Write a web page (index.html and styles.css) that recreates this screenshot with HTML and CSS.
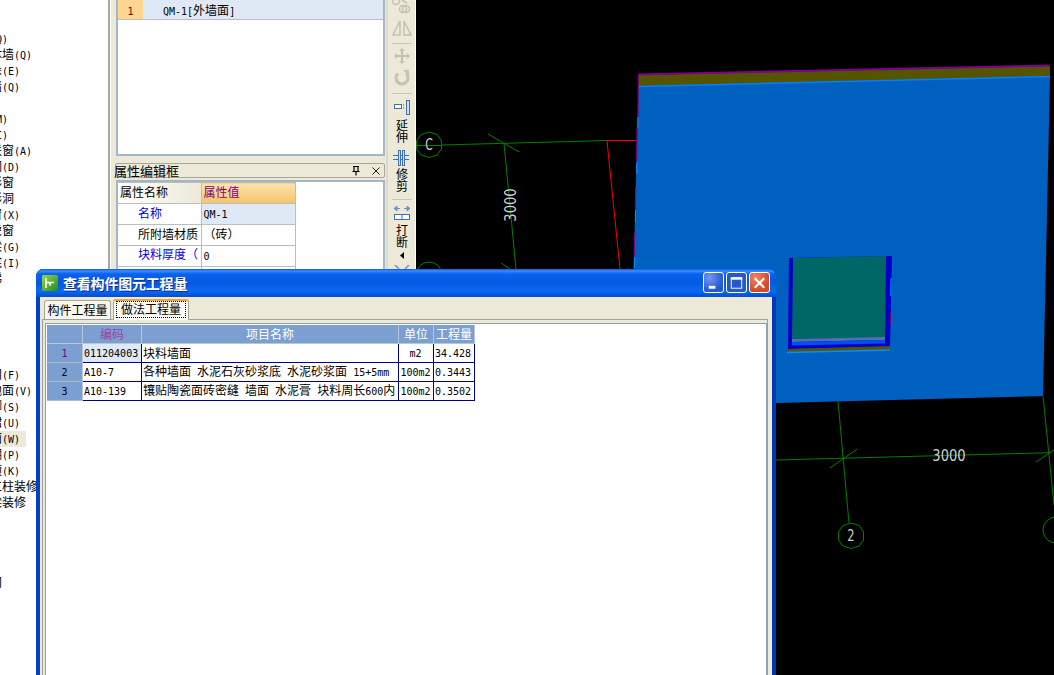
FILE: index.html
```html
<!DOCTYPE html>
<html lang="zh">
<head>
<meta charset="utf-8">
<title>查看构件图元工程量</title>
<link rel="stylesheet" href="styles.css">
</head>
<body>
<div class="app">
  <aside class="tree">
    <ul class="tree-list">
      <li>墙<span class="l">(Q)</span></li>
      <li>砌体墙<span class="l">(Q)</span></li>
      <li>墙垛<span class="l">(E)</span></li>
      <li>幕墙<span class="l">(Q)</span></li>
      <li></li>
      <li>门<span class="l">(M)</span></li>
      <li>窗<span class="l">(C)</span></li>
      <li>门联窗<span class="l">(A)</span></li>
      <li>墙洞<span class="l">(D)</span></li>
      <li>带形窗</li>
      <li>带形洞</li>
      <li>飘窗<span class="l">(X)</span></li>
      <li>老虎窗</li>
      <li>过梁<span class="l">(G)</span></li>
      <li>壁龛<span class="l">(I)</span></li>
      <li>楼梯</li>
      <li></li><li></li><li></li><li></li><li></li>
      <li>房间<span class="l">(F)</span></li>
      <li>楼地面<span class="l">(V)</span></li>
      <li>踢脚<span class="l">(S)</span></li>
      <li>墙裙<span class="l">(U)</span></li>
      <li class="selected">墙面<span class="l">(W)</span></li>
      <li>天棚<span class="l">(P)</span></li>
      <li>吊顶<span class="l">(K)</span></li>
      <li>独立柱装修</li>
      <li>单梁装修</li>
      <li></li><li></li><li></li><li></li>
      <li>房间</li>
    </ul>
  </aside>

  <section class="side">
    <div class="list-box">
      <div class="list-row">
        <span class="list-num"><span class="l">1</span></span>
        <span class="list-name"><span class="l">QM-1[</span>外墙面<span class="l">]</span></span>
      </div>
    </div>
    <div class="prop-title">
      <span class="prop-title-text">属性编辑框</span>
      <svg class="pin" width="12" height="12" viewBox="0 0 12 12"><path d="M3 1.500h6M4 1.500v5h4v-5M2.500 6.500h7M6 6.500v4" fill="none" stroke="#000" stroke-width="1.200"/></svg>
      <svg class="close-x" width="10" height="10" viewBox="0 0 10 10"><path d="M1.500 1.500l7 7M8.500 1.500l-7 7" stroke="#222" fill="none"/></svg>
    </div>
    <div class="prop-box">
      <table class="prop-table">
        <tr><th class="prop-h-name">属性名称</th><th class="prop-h-val">属性值</th></tr>
        <tr><td class="prop-name key">名称</td><td class="prop-val active"><span class="l">QM-1</span></td></tr>
        <tr><td class="prop-name">所附墙材质</td><td class="prop-val">（砖）</td></tr>
        <tr><td class="prop-name key raised">块料厚度（</td><td class="prop-val"><span class="l">0</span></td></tr>
        <tr><td class="prop-name"></td><td class="prop-val"></td></tr>
      </table>
    </div>
  </section>

  <nav class="toolbar">
    <svg class="tool tool-first" width="20" height="15" viewBox="0 0 20 15"><g fill="none" stroke="#c4c2b4" stroke-width="1.600"><circle cx="4" cy="1" r="3.500"/><circle cx="11" cy="9" r="3.500"/><circle cx="14" cy="9" r="3.500"/><path d="M10 0l5 3"/></g></svg>
    <svg class="tool tool-mirror" width="20" height="16" viewBox="0 0 20 16"><g fill="none" stroke="#c4c2b4" stroke-width="1.500"><path d="M8 1L1 15h7zM12 1l7 14h-7z"/></g></svg>
    <hr class="tool-sep sep-a">
    <svg class="tool tool-move" width="16" height="16" viewBox="0 0 16 16"><path d="M8 0l3 3H9v4h4V5l3 3-3 3V9H9v4h2l-3 3-3-3h2V9H3v2L0 8l3-3v2h4V3H5z" fill="#c4c2b4"/></svg>
    <svg class="tool tool-rotate" width="16" height="16" viewBox="0 0 16 16"><path d="M4 3.500A6 6 0 1 0 12 3.500" fill="none" stroke="#c4c2b4" stroke-width="3"/><path d="M9 0h6v6z" fill="#c4c2b4"/></svg>
    <hr class="tool-sep sep-b">
    <svg class="tool tool-extend" width="16" height="15" viewBox="0 0 16 15"><rect x="0.500" y="4.500" width="7" height="4" fill="#fff" stroke="#3f6fb5"/><path d="M9 5h1M9 8h1" stroke="#3f6fb5"/><rect x="12.500" y="0.500" width="3" height="14" fill="#cfe0f5" stroke="#3f6fb5"/></svg>
    <span class="tool-label label-extend">延<br>伸</span>
    <svg class="tool tool-trim" width="18" height="16" viewBox="0 0 18 16"><path d="M0 5.500h16M0 9.500h16" stroke="#3f6fb5"/><rect x="5.500" y="0.500" width="2" height="15" fill="#cfe0f5" stroke="#3f6fb5"/><rect x="9.500" y="0.500" width="2" height="15" fill="#cfe0f5" stroke="#3f6fb5"/></svg>
    <span class="tool-label label-trim">修<br>剪</span>
    <hr class="tool-sep sep-c">
    <svg class="tool tool-break" width="16" height="15" viewBox="0 0 16 15"><path d="M0 2.500h6M16 2.500h-6M3 0L0 2.500l3 2.500zM13 0l3 2.500-3 2.500z" fill="#6c92cc" stroke="#6c92cc"/><rect x="0.500" y="8.500" width="15" height="5" fill="#fff" stroke="#3f6fb5"/><path d="M8 8.500v5" stroke="#3f6fb5"/></svg>
    <span class="tool-label label-break">打<br>断</span>
    <svg class="tool tool-caret" width="5" height="7" viewBox="0 0 5 7"><path d="M4 0v7L0 3.500z" fill="#000"/></svg>
    <svg class="tool tool-more" width="16" height="6" viewBox="0 0 16 6"><path d="M1 0l4 4M15 0l-4 4" stroke="#6c92cc" stroke-width="1.500"/></svg>
  </nav>

  <main class="canvas">
    <svg class="drawing" width="638" height="675" viewBox="416 0 638 675">
      <polygon points="638.500,85 1050,76 1043,396 776,403 630,406" fill="#0060c0"/>
      <polygon points="639,75 1050,66 1050,76 639,86" fill="#555500"/>
      <path d="M638 74.500L1049 65.500" stroke="#800090" stroke-width="2"/>
      <path d="M639 86.500L1050 76.500" stroke="#0080ff" stroke-width="1.500"/>
      <path d="M638.300 75L638 116M637 128L636.700 162M635.700 187L635.300 210M634.500 233L634.200 257" stroke="#800080" stroke-width="1.200" fill="none"/>
      <path d="M638 117L637.800 128M636.800 162L636.600 174M635.500 210L635.300 222M634.500 257L634.300 268" stroke="#0090ff" stroke-width="1"/>
      <polygon points="789,258 892,256 890,347 788,349" fill="#0000c8"/>
      <polygon points="793,258 886,256 885,338 792,339" fill="#006666"/>
      <polygon points="792,339 885,337 885,340 792,342" fill="#5070b0"/>
      <polygon points="792,342 885,340 885,343.500 792,345.500" fill="#0050f0"/>
      <polygon points="788,349 890,346 890,350 788,352" fill="#555500"/>
      <path d="M787 352.500L890 350" stroke="#0090ff" stroke-width="1.500"/>
      <path d="M891 278L890.700 296" stroke="#0090ff" stroke-width="1"/>
      <path d="M890.500 313L890.300 325" stroke="#800060" stroke-width="1"/>

      <g fill="none" stroke="#008000" stroke-width="1">
        <path d="M442 145L607 140.500"/>
        <path d="M504 143L516 269"/>
        <path d="M488 134L519 152"/>
        <path d="M501 263L510 269"/>
        <polygon points="429,132 437,134.500 441.500,141 441.500,149 437,155 429,157.500 421,155 416.500,149 416.500,141 421,134.500"/>
        <path d="M416 145.500H442"/>
        <circle cx="429" cy="275" r="13"/>
        <path d="M776 460L1050 452.700"/>
        <path d="M838 401L849 523"/>
        <path d="M830 468L857 449"/>
        <path d="M1043 396L1054 505"/>
        <path d="M1036 462L1054 450"/>
        <polygon points="851,523 859,525.500 863.500,532 863.500,540 859,546 851,548.500 843,546 838.500,540 838.500,532 843,525.500"/>
        <circle cx="1056" cy="530" r="13"/>
      </g>
      <path d="M607 140.500H636M607 141L620 269" stroke="#ff0000" stroke-width="1" fill="none"/>
      <g class="cad-text">
        <text text-anchor="middle" transform="translate(429 150) scale(.8 1.200)">C</text>
        <text text-anchor="middle" transform="translate(851 541) scale(.85 1.200)">2</text>
        <text text-anchor="middle" transform="translate(949 461) scale(.97 1.200)">3000</text>
        <text text-anchor="middle" transform="translate(516 205) rotate(-90) scale(.97 1.200)">3000</text>
      </g>
    </svg>
  </main>

  <div class="dialog">
    <header class="title-bar">
      <svg class="app-icon" width="16" height="16" viewBox="0 0 16 16"><defs><linearGradient id="ig" x1="0" y1="0" x2="1" y2="1"><stop offset="0" stop-color="#9bd84a"/><stop offset="1" stop-color="#1f8a1f"/></linearGradient></defs><rect width="16" height="16" rx="1.500" fill="url(#ig)"/><path d="M4 3v10M4 7.500h8M8 7.500v3" stroke="#fff" stroke-width="1.600" fill="none"/></svg>
      <span class="title-text">查看构件图元工程量</span>
      <div class="win-btns">
        <button class="win-btn win-min"><svg width="20" height="20" viewBox="0 0 20 20"><rect x="5" y="13" width="7" height="3" fill="#fff"/></svg></button>
        <button class="win-btn win-max"><svg width="20" height="20" viewBox="0 0 20 20"><rect x="4.500" y="4.500" width="11" height="11" fill="none" stroke="#fff"/><rect x="4" y="4" width="12" height="2.500" fill="#fff"/></svg></button>
        <button class="win-btn win-close"><svg width="20" height="20" viewBox="0 0 20 20"><path d="M5 5l10 10M15 5L5 15" stroke="#fff" stroke-width="2.200"/></svg></button>
      </div>
    </header>
    <div class="dialog-body">
      <div class="tabs">
        <span class="tab">构件工程量</span>
        <span class="tab tab-active"><span class="tab-focus">做法工程量</span></span>
      </div>
      <div class="tab-panel">
        <div class="grid-frame">
          <table class="qty">
            <colgroup>
              <col class="c-num"><col class="c-code"><col class="c-name"><col class="c-unit"><col class="c-qty">
            </colgroup>
            <tr class="qty-head">
              <th></th><th class="code-head">编码</th><th>项目名称</th><th>单位</th><th>工程量</th>
            </tr>
            <tr>
              <th class="row-num current"><span class="l">1</span></th>
              <td class="code-current"><span class="l">011204003</span></td>
              <td>块料墙面</td>
              <td class="center"><span class="l">m2</span></td>
              <td><span class="l">34.428</span></td>
            </tr>
            <tr>
              <th class="row-num"><span class="l">2</span></th>
              <td><span class="l">A10-7</span></td>
              <td>各种墙面<span class="l"> </span>水泥石灰砂浆底<span class="l"> </span>水泥砂浆面<span class="l"> 15+5mm</span></td>
              <td class="center"><span class="l">100m2</span></td>
              <td><span class="l">0.3443</span></td>
            </tr>
            <tr>
              <th class="row-num"><span class="l">3</span></th>
              <td><span class="l">A10-139</span></td>
              <td>镶贴陶瓷面砖密缝<span class="l"> </span>墙面<span class="l"> </span>水泥膏<span class="l"> </span>块料周长<span class="l">600</span>内</td>
              <td class="center"><span class="l">100m2</span></td>
              <td><span class="l">0.3502</span></td>
            </tr>
          </table>
        </div>
      </div>
    </div>
  </div>
</div>
</body>
</html>
```
FILE: styles.css
```css
* { box-sizing: border-box; }
html, body { margin: 0; padding: 0; background: #000; }
body { font: 12px/16px "Noto Sans CJK SC", "Liberation Sans", sans-serif; color: #000; }
.l { font-family: "DejaVu Sans Mono", "Liberation Mono", monospace; font-size: 10px; line-height: 12px; white-space: pre; }

.app { position: relative; display: flex; width: 1054px; height: 675px; overflow: hidden; }

/* left tree */
.tree { width: 108px; flex: none; background: #fff; overflow: hidden; }
.tree-list { list-style: none; margin: 31px 0 0 -22px; padding: 0; }
.tree-list li { height: 16px; line-height: 14px; white-space: nowrap; }
.tree-list li.selected { background: #ece9d8; width: 48px; }

/* property side */
.side { width: 278px; flex: none; background: #ece9d8; border-left: 2px solid #a8a799; box-shadow: inset 1px 0 0 #fff; padding: 0 1px 0 6px; }
.list-box { height: 156px; background: #fff; border: 2px solid #a4b5c6; border-top: 0; }
.list-row { display: flex; height: 20px; border-bottom: 1px solid #b9bec6; }
.list-num { width: 25px; background: #fdd68f; color: #800000; text-align: center; line-height: 19px; }
.list-name { flex: 1; background: #dfe8f5; padding-left: 20px; line-height: 19px; }
.prop-title { display: flex; align-items: center; height: 15px; margin: 7px 0 0 -1px; border: 1px solid #a8a799; border-radius: 2px; background: #ece9d8; }
.prop-title-text { flex: 1; margin-left: -2px; font-size: 13px; line-height: 13px; }
.pin { margin-right: 9px; }
.close-x { margin-right: 3px; }
.prop-box { height: 200px; margin-top: 2px; background: #fff; border: 2px solid #a4b5c6; }
.prop-table { border-collapse: collapse; table-layout: fixed; width: 177px; }
.prop-table th, .prop-table td { height: 21px; padding: 0 0 2px; line-height: 14px; border: 1px solid #bdbdbd; border-left: 0; font-weight: normal; text-align: left; white-space: nowrap; overflow: hidden; }
.prop-table .prop-h-name { width: 83px; padding-left: 2px; background: linear-gradient(90deg, #fff, #ece9d8); }
.prop-table .prop-h-val { width: 94px; padding-left: 2px; color: #800080; background: linear-gradient(#fde3ae, #f5c36a); }
.prop-table .prop-name { padding-left: 20px; }
.prop-table .prop-name.key { color: #0000e0; }
.prop-table .prop-name.raised { padding-bottom: 5px; }
.prop-table .prop-val { padding-left: 2px; }
.prop-table .prop-val.active { background: #dfe8f5; }

/* vertical toolbar */
.toolbar { width: 30px; flex: none; display: flex; flex-direction: column; align-items: center; background: #ece9d8; border-right: 1px solid #fff; padding-left: 3px; box-shadow: inset 2px 0 0 #dcd9c8; }
.tool { flex: none; display: block; }
.tool-first { margin-top: 0; }
.tool-mirror { margin-top: 5px; }
.tool-sep { width: 20px; height: 1px; flex: none; margin: 0; border: 0; background: #c8c6b6; }
.sep-a { margin-top: 7px; }
.tool-move { margin-top: 4px; }
.tool-rotate { margin-top: 6px; }
.sep-b { margin-top: 7px; }
.tool-extend { margin-top: 6px; }
.tool-label { display: block; flex: none; font-size: 12px; line-height: 12px; text-align: center; }
.label-extend { margin-top: 4px; }
.tool-trim { margin-top: 7px; }
.label-trim { margin-top: 2px; }
.sep-c { margin-top: 7px; }
.tool-break { margin-top: 6px; }
.label-break { margin-top: 3px; }
.tool-caret { margin-top: 4px; }
.tool-more { margin-top: 6px; }

/* CAD canvas */
.canvas { flex: 1; position: relative; background: #000; overflow: hidden; }
.drawing { display: block; }
.cad-text text { fill: #cfcfcf; font: 13.500px "DejaVu Sans", sans-serif; }

/* dialog */
.dialog { position: absolute; left: 36px; top: 269px; width: 740px; height: 430px; display: flex; flex-direction: column; border-radius: 7px 7px 0 0; background: #0a4fd8; border: 4px solid #0340c8; border-top: 0; border-right-color: #0336b4; }
.title-bar { flex: none; display: flex; align-items: center; height: 28px; margin: 0 -4px; padding: 0 6px 1px 6px; border-radius: 7px 7px 0 0; background: linear-gradient(#0a5be0 0, #3a8cff 2px, #0a62ee 5px, #0458e4 14px, #0a6af2 22px, #0450d8 27px); }
.app-icon { flex: none; }
.title-text { margin-left: 5px; color: #fff; font-size: 14px; font-weight: 700; letter-spacing: -0.200px; line-height: 18px; text-shadow: 1px 1px 0 #0a2f90; }
.win-btns { margin-left: auto; display: flex; gap: 2px; }
.win-btn { width: 21px; height: 21px; padding: 0; border: 1px solid #fff; border-radius: 3px; background: radial-gradient(circle at 30% 25%, #7298f0, #2457d0 70%); display: flex; align-items: center; justify-content: center; }
.win-max { background: #2457d0; }
.win-close { background: radial-gradient(circle at 30% 25%, #ec8566, #cf4a26 70%); }
.dialog-body { flex: 1; background: #ece9d8; display: flex; flex-direction: column; min-height: 0; }
.tabs { flex: none; display: flex; align-items: flex-end; height: 23px; padding-left: 4px; gap: 2px; }
.tab { height: 19px; width: 67px; margin-bottom: 1px; text-align: center; line-height: 18px; background: #f7f6ef; border: 1px solid #a8a799; border-bottom: 0; border-radius: 3px 3px 0 0; }
.tab-active { height: 21px; width: 76px; margin-bottom: 0; background: #fbfaf5; border-top: 2px solid #f5a623; padding: 0 2px; position: relative; z-index: 1; }
.tab-focus { display: block; outline: 1px dotted #000; outline-offset: -1px; line-height: 16px; height: 17px; }
.tab-panel { flex: 1; margin: -1px 4px 0 2px; padding: 3px 0 3px 2px; border: 1px solid #a0a0a0; border-bottom: 0; background: #ece9d8; min-height: 0; }
.grid-frame { height: 100%; background: #fff; border: 1px solid #8aa0b8; padding: 1px; }
.qty { border-collapse: separate; border-spacing: 0; table-layout: fixed; width: 428px; }
.c-num { width: 36px; } .c-code { width: 59px; } .c-name { width: 257px; } .c-unit { width: 35px; } .c-qty { width: 41px; }
.qty th, .qty td { height: 19px; padding: 0 2px 1px; line-height: 14px; white-space: nowrap; overflow: hidden; font-weight: normal; }
.qty td { border-right: 1px solid #000090; border-bottom: 1px solid #000090; padding-left: 1px; }
.qty-head th { background: #7a9fd0; color: #fff; text-align: center; border-right: 1px solid #b8c6d6; border-bottom: 1px solid #b8c6d6; }
.qty-head .code-head { color: #a040a0; }
.qty .row-num { background: #7a9fd0; text-align: center; border-right: 1px solid #b8c6d6; border-bottom: 1px solid #b0b8c0; }
.qty .row-num.current { color: #800080; }
.code-current { background: #dfe8f5; }
.center { text-align: center; }
```
